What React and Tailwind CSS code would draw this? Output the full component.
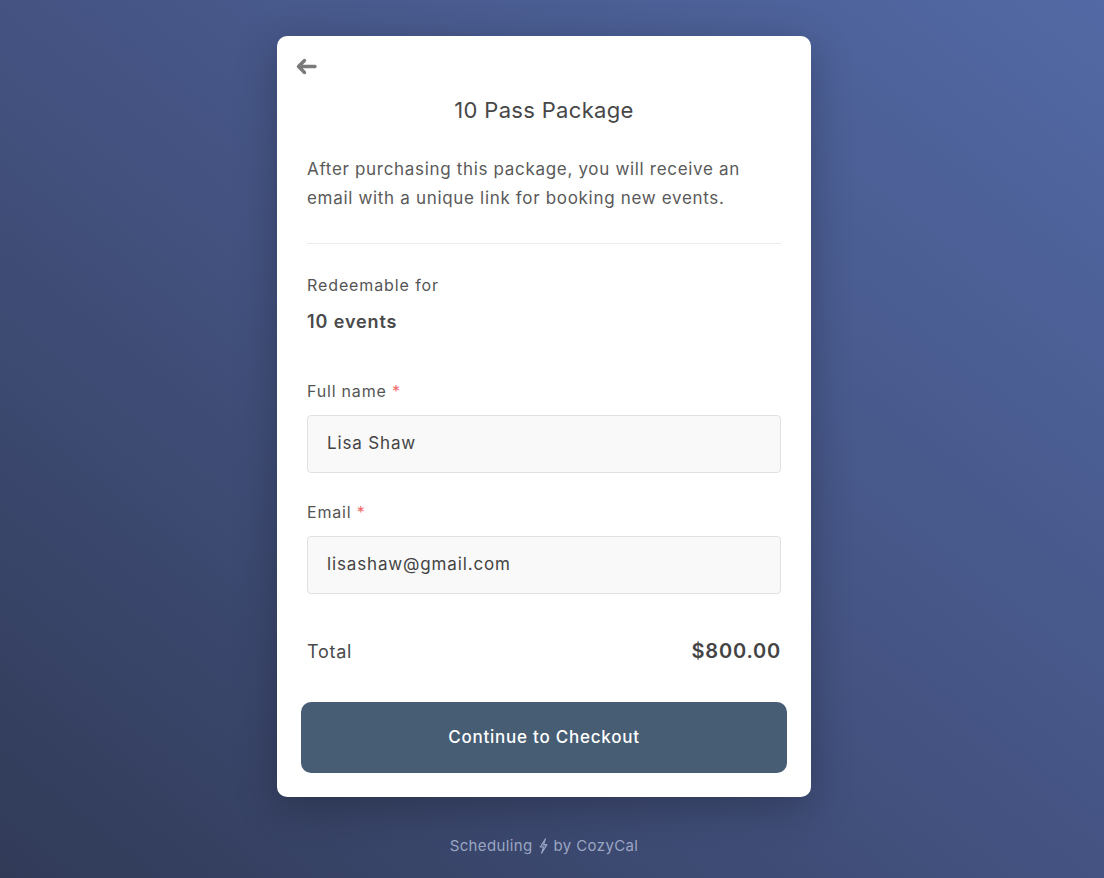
import React from "react";

function BackArrow() {
  return (
    <svg width="22" height="17" viewBox="0 0 22 17" fill="none">
      <path
        d="M20 8.5H4.5M9.5 2.5L3.5 8.5l6 6"
        stroke="#7a7a7a"
        strokeWidth="3.4"
        strokeLinecap="round"
        strokeLinejoin="round"
      />
    </svg>
  );
}

function Bolt() {
  return (
    <svg width="9" height="16" viewBox="0 0 9 16" fill="none" className="inline-block">
      <path
        d="M6.5 0.8L1.2 9h3.3L2.6 15.2 7.9 6.6H4.6z"
        stroke="#9aa5c3"
        strokeWidth="1.1"
        strokeLinejoin="round"
        fill="#9aa5c3"
        fillOpacity="0.35"
      />
    </svg>
  );
}

function Field({ label, value }) {
  return (
    <div>
      <p className="h-6 text-[16px] leading-6 tracking-[0.05em] text-[#555]">
        {label} <span className="text-[#f06b6b]">*</span>
      </p>
      <div className="mt-3 flex h-[58px] items-center rounded-[4px] border border-[#e1e1e1] bg-[#f9f9f9] px-[19px] text-[17px] tracking-[0.05em] text-[#444]">
        {value}
      </div>
    </div>
  );
}

export default function App() {
  return (
    <div
      className="flex min-h-screen flex-col items-center bg-gradient-to-tr from-[#313b58] via-[#445382] to-[#5269a5] pr-[16px] pt-[36px]"
      style={{ fontFamily: "Inter, 'Noto Sans', sans-serif" }}
    >
      <div className="w-[534px] rounded-[10px] bg-white px-[24px] pb-[24px] pt-[22px] shadow-[0_10px_40px_rgba(0,0,0,0.25)]">
        <div className="ml-[-6px] h-[17px]">
          <BackArrow />
        </div>

        <h1 className="mt-[20px] text-center text-[22px] leading-[30px] tracking-[0.015em] text-[#474747]">
          10 Pass Package
        </h1>

        <div className="px-[6px]">
          <p className="mt-[30px] text-[17px] leading-[29px] tracking-[0.04em] text-[#5a5a5a]">
            After purchasing this package, you will receive an email with a
            unique link for booking new events.
          </p>

          <div className="mt-[30px] h-px bg-[#ececec]" />

          <p className="mt-[29px] text-[16px] leading-6 tracking-[0.056em] text-[#555]">
            Redeemable for
          </p>
          <p className="mt-[12px] text-[18px] font-semibold leading-[26px] tracking-[0.05em] text-[#4a4a4a]">
            10 events
          </p>

          <div className="mt-[44px]">
            <Field label="Full name" value="Lisa Shaw" />
          </div>
          <div className="mt-[27px]">
            <Field label="Email" value="lisashaw@gmail.com" />
          </div>

          <div className="mt-[43px] flex h-[28px] items-center justify-between">
            <span className="text-[18px] tracking-[0.04em] text-[#4a4a4a]">Total</span>
            <span className="text-[20px] font-semibold tracking-[0.04em] text-[#444]">
              $800.00
            </span>
          </div>
        </div>

        <button className="mt-[37px] flex h-[71px] w-full items-center justify-center rounded-[10px] bg-[#475d73] text-[17px] font-medium tracking-[0.045em] text-white">
          Continue to Checkout
        </button>
      </div>

      <p className="mt-[39px] flex items-center gap-[6px] text-[15px] leading-5 tracking-[0.025em] text-[#9aa5c3]">
        Scheduling <Bolt /> by CozyCal
      </p>
    </div>
  );
}
